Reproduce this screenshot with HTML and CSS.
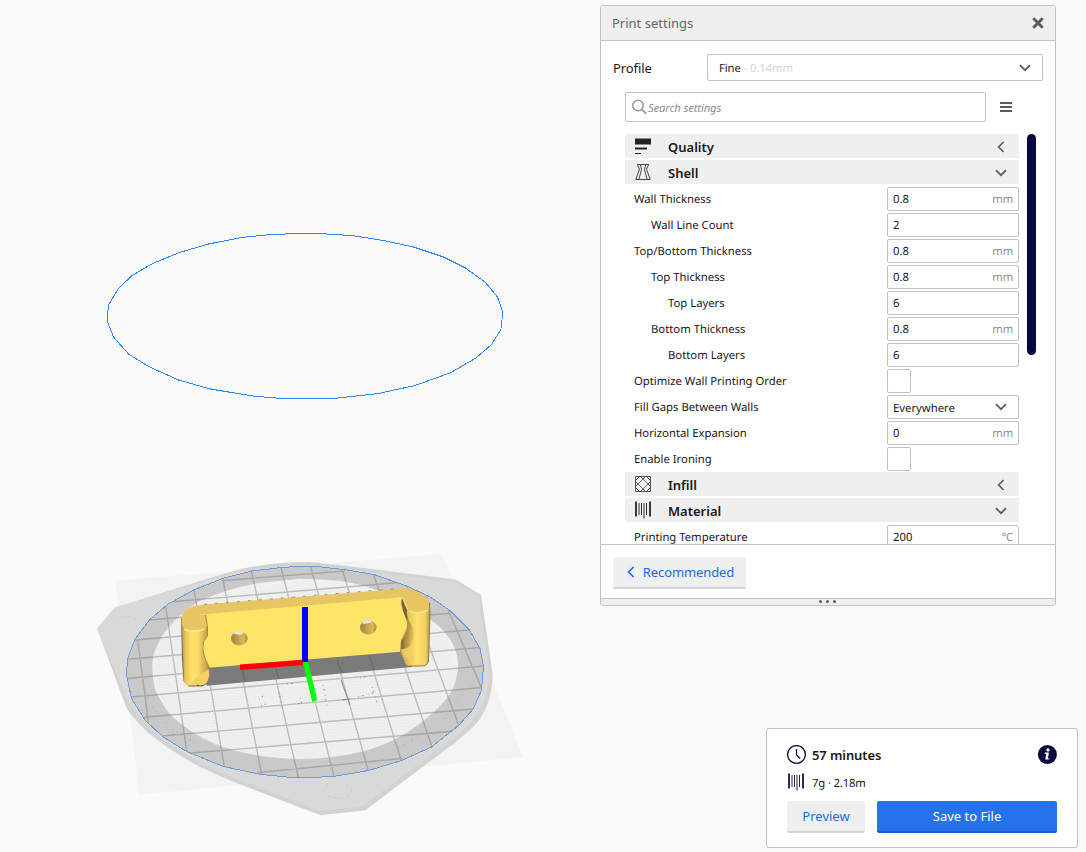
FILE: index.html
```html
<!DOCTYPE html>
<html lang="en">
<head>
<meta charset="utf-8">
<title>Print settings</title>
<link rel="stylesheet" href="styles.css">
</head>
<body>
<svg width="0" height="0" class="defs">
  <symbol id="down" viewBox="0 0 12 8"><path d="M1 1.2 6 6.2 11 1.2" fill="none" stroke="currentColor" stroke-width="1.7"/></symbol>
  <symbol id="left" viewBox="0 0 8 12"><path d="M6.6 1 1.6 6 6.6 11" fill="none" stroke="currentColor" stroke-width="1.7"/></symbol>
  <symbol id="spool" viewBox="0 0 16 18"><path d="M1 .5v15M15 .5v15" stroke="currentColor" stroke-width="1.7"/><path d="M4 2v12M6.500 2v12M9 2v15.500M11.500 2v12" stroke="currentColor" stroke-width=".9"/></symbol>
</svg>
<main class="stage">
  <svg class="viewport" width="1086" height="852" viewBox="0 0 1086 852">
    <defs>
      <clipPath id="bed"><path d="M300 566.3 281.5 567.5 251.5 571 222.5 578.5 193.5 590 167.5 604.5 149.5 620 135 639 127.5 659 126.5 675 131.5 698.5 145 720 162.5 736.5 186.5 751.5 223.5 766.5 260 774.3 296.5 778 333.5 776.5 368.5 770.5 401.5 760.5 431.5 747 458.5 725.5 473.5 708.5 481.5 690 483.5 666.5 480 648.5 469.5 630 450 610.5 428.5 596 406.5 586 374 574.5 343.5 569.5 316.5 566.5Z"/></clipPath>
      <pattern id="mesh" width="3" height="3" patternUnits="userSpaceOnUse"><path d="M0 .5h3M.5 0v3" stroke="#e9e9e9" stroke-width="1"/></pattern>
      <linearGradient id="pillarL" x1="0" x2="1"><stop offset="0" stop-color="#b79442"/><stop offset=".14" stop-color="#eac75d"/><stop offset=".38" stop-color="#ffe36a"/><stop offset=".6" stop-color="#fbd965"/><stop offset=".8" stop-color="#d9b554"/><stop offset="1" stop-color="#b08e42"/></linearGradient>
      <linearGradient id="pillarR" x1="0" x2="1"><stop offset="0" stop-color="#c9a64e"/><stop offset=".28" stop-color="#e9c75c"/><stop offset=".55" stop-color="#ffe169"/><stop offset=".85" stop-color="#f2cf60"/><stop offset="1" stop-color="#b39149"/></linearGradient>
      <linearGradient id="groove" x1="0" x2="1" y2=".3"><stop offset="0" stop-color="#65542f"/><stop offset=".4" stop-color="#917839"/><stop offset="1" stop-color="#ddba55"/></linearGradient>
      <linearGradient id="hole" x1="0" x2="1"><stop offset="0" stop-color="#9c8244"/><stop offset=".35" stop-color="#bb9b4c"/><stop offset=".75" stop-color="#dcb957"/><stop offset="1" stop-color="#a78a47"/></linearGradient>
    </defs>
    <path class="ring-line" d="M299 233.5H318.5L351.5 235.5 383.5 240.5 413.5 247 443.5 257 465.5 268 485.5 282.5 497.5 297 502.5 311 501.5 328.5 491.5 344.5 476 358 450 373 415 385.5 378.5 393.5 334 398.5H281.5L252.5 396 210.5 389 178.5 380 148.5 366.5 128.5 354 113.5 337 107.5 322V315L108.5 305 118.5 288.5 131.5 276 152.5 263.5 179.5 252.5 208.5 244 241.5 237.5 271.5 234.5Z"/>
    <path fill="#f3f3f3" d="M115.7 580.7 441.7 554 523 757 139 794.7Z"/>
    <path fill="#d2d2d2" d="M115 607.5 223 574Q260 562 310 562L346.5 566 455.5 579.5 481 595 492.5 673Q493 693 485 710 478 724 466.5 733 456 743 443 751.5L365 810.5 320.5 815 300 807.5 236.5 783Q205 770 190 761.5 150 738 135 719 128 712 125 704L97 628.5Z"/>
    <path fill="#d9d9d9" d="M115 607.5 223 575.5Q260 566 310 565L455.5 582 479 597 489 673Q489 692 481 708 471 724 461 732L363 806 320.5 811 236 779Q205 766 190 757 155 738 138 715 130 706 126 697L97 628.5Z"/>
    <g clip-path="url(#bed)">
      <path fill="#c9c9c9" d="M120 560H490V785H120Z"/>
      <path fill="#f0f0f0" d="M300 578.7 260 582.7Q224 589 198 602 183 612 173 623 163 633 160 640 151 656 152.500 666.500 152 690 161.500 701.500 167 713 180 723 191 732 203 738 212 743 223 746.500 237 752 253 754.500 270 758 300 759 317 759 333 756.700 349 755 363 751.500 385 745 403 735 418 726 428.500 716.500 441 706 446.500 698.500 455 688 456.500 676.500 459 668 457.500 658.500 455 645 448 636.500 441 627 430 619.300 408 602 376.500 590 368 587 356.500 584 340 580 325 579.700Z"/>
      <path fill="url(#mesh)" opacity=".5" d="M198 602Q160 622 155 660 152 695 180 723 210 750 253 754 330 763 384 743 452 712 456 676 453 632 400 602L300 582Z"/>
      <path class="grid" d="M137.5 639 148.5 722.7M165.7 606.7 186.7 751.7M194 590 224.3 766.7M222.7 578.3 261.7 774.3M251.3 571 298.3 777.5M281 567.3 334 776.3M310.7 567 368.3 770.7M342.3 570 401 760M373.7 575 432 747.3M406.7 586 459 726M448 609.5 481.7 688.5M221.7 580.7 345 571M171.7 601.7 396.7 582.7M149.3 620 428 597M135 640 450 613.3M127.7 659.3 469.3 630M126.7 678.5 480 647.5M130.7 697 483.3 666M144 717.3 482.3 687.5M161.7 736 474 709M185 753.5 457 731M258 772.5 402 758.5"/>
    </g>
    <path fill="none" stroke="#b0b0b0" stroke-dasharray="2 3 1 4" d="M145 688Q149 704 163 720T198 743M464 689Q455 706 441 721M421 734Q410 743 396 748"/>
    <path fill="none" stroke="#999" stroke-dasharray="1 3 2 4" d="M259 700 264 695M261 706 266 704M287 684 297 683M279 692 283 711M300 698 303 707M323 685 327 706M360 678 369 676M358 697 376 692M294 704 304 703M372 687 377 703"/>
    <path fill="none" stroke="#888" d="M341 680 350 705M342 700 350 699"/>
    <path fill="none" stroke="#cecece" stroke-dasharray="4 3" d="M328 783 324 791 330 797 346 799 352 790 345 783M115 623 121 617H132L140 622"/>
    <path class="bed-line" d="M300 566.3 281.5 567.5 251.5 571 222.5 578.5 193.5 590 167.5 604.5 149.5 620 135 639 127.5 659 126.5 675 131.5 698.5 145 720 162.5 736.5 186.5 751.5 223.5 766.5 260 774.3 296.5 778 333.5 776.5 368.5 770.5 401.5 760.5 431.5 747 458.5 725.5 473.5 708.5 481.5 690 483.5 666.5 480 648.5 469.5 630 450 610.5 428.5 596 406.5 586 374 574.5 343.5 569.5 316.5 566.5Z"/>
    <!-- model shadow on the bed -->
    <path fill="#7b7b7b" d="M206 666 402 650 412 667 206.7 685.7Z"/>
    <path stroke="#666" d="M242 668 245 682M275 666 279 679M305 665 309 676M337 660 342 673M369 656 374 670"/>
    <!-- handle -->
    <path fill="#6f6650" d="M181 617 182 660 183.500 681 189 686.500H202L207 684 190 630Z"/>
    <path fill="#e7c562" d="M181.700 616.700Q183 611 186.700 609.500 191 606.500 196.700 605.500L206.700 604.300 396.700 589 403.300 588Q409 588 413.300 590L423.300 595Q428 598 429.300 603.300V609L425 613 410 612 403.300 598 206 615 206 627 188 631 182 626Z"/>
    <path stroke="#8c7842" stroke-width=".7" stroke-dasharray="3 8" fill="none" d="M204 604.400 400 588.300"/>
    <path fill="#ffe567" d="M205 614.300 403.300 597 408 613 408 632 400 651.700 209.300 667.800 200 660V614Z"/>
    <path fill="url(#pillarL)" d="M181.700 624Q184 630 193 630.500 204 630 206.700 625.500L207.500 635 203.300 641.700Q201.500 647 202.700 651L205 659 209.300 668V675L207 682Q205 685 200 685.500H188.500Q184 684.500 184 681Z"/>
    <path fill="#f5d162" d="M208.500 669Q203 672 193 681L190 685H200Q205 685 207 682L209.300 676Z"/>
    <path fill="#e7c562" d="M181.700 616 206 614.500 207 625Q204 630.500 193 630 184 630 181.700 624Z"/>
    <path fill="none" stroke="#ffe77a" stroke-width="1.600" d="M184 629Q193 634 205 629"/>
    <path fill="none" stroke="#8d7339" stroke-width=".8" d="M205.500 615 207.500 627V636L203.500 641.500Q201.500 649 205 658.500L209.500 668"/>
    <path fill="url(#pillarR)" d="M407 609Q417 615 429 609L430 613.300 428.300 662Q427 665.500 422.500 666H409Q405 665 404.500 661L400.500 652 401 640 407.500 625Z"/>
    <path fill="url(#groove)" d="M406 611 409 621Q414 627 413.500 636 412 645 406 652L400.500 651 401 641Q408 633 407 622L402 608Z"/>
    <path fill="#efcd5e" d="M400.500 649Q406 650 411 645L413 658 405 657Z"/>
    <path fill="#776336" d="M402 598Q400.500 604 402.500 608L407 620V610Z"/>
    <path fill="#e7c562" d="M403 597 413 590 423.300 595Q430 600 429 608 425 612 412 612 407 610 406.500 606Z"/>
    <path fill="none" stroke="#ffe77a" stroke-width="1.600" d="M409 611Q418 615 428 610"/>
    <path fill="none" stroke="#8d7844" d="M429.500 603 430 613.500 428.500 661Q427 666 422 666H409"/>
    <ellipse cx="239.3" cy="638.5" rx="8.300" ry="7" fill="url(#hole)"/>
    <path fill="#e6e6e2" d="M233.5 633Q238 630 243 632L241 635 234 634Z"/>
    <ellipse cx="368.3" cy="627.5" rx="8.300" ry="7" fill="url(#hole)"/>
    <path fill="#e6e6e2" d="M362.5 622Q367 619 372 621L370 623 363 624Z"/>
    <!-- origin axes -->
    <path fill="red" d="M240 664.5 303 659.7V665L240 670ZM197 685h2v1h-2z"/>
    <path fill="#0f0" d="M302.7 662H308L317.3 700 312.3 702Z"/>
    <path fill="#00f" shape-rendering="crispEdges" d="M302 607H308V662H302Z"/>
  </svg>

  <section class="settings">
    <header class="title"><span>Print settings</span>
      <svg width="12" height="12" viewBox="0 0 12 12"><path d="M1.3 1.3 10.7 10.7M10.7 1.3 1.3 10.7" stroke="#5c5c5c" stroke-width="3"/></svg>
    </header>
    <div class="profile"><span>Profile</span>
      <div class="select"><span>Fine <i>- 0.14mm</i></span><svg class="chev" width="12" height="8"><use href="#down"/></svg></div>
    </div>
    <div class="search">
      <div class="field"><svg width="16" height="16" viewBox="0 0 16 16"><circle cx="6" cy="6.500" r="5.200" fill="none" stroke="#9a9a9a" stroke-width="1.500"/><path d="M9.800 10.300 14.300 14.800" stroke="#9a9a9a" stroke-width="1.700"/></svg><em>Search settings</em></div>
      <svg width="12" height="10"><path d="M0 1h12M0 5h12M0 9h12" stroke="#5c5c5c" stroke-width="2"/></svg>
    </div>
    <div class="scroll">
      <div class="rows">
        <div class="group"><svg width="16" height="16" viewBox="0 0 16 16"><path fill="#222" d="M0 .5h16v6H0zM0 9.500h12v2H0zM0 15h6v1H0z"/></svg><b>Quality</b><svg class="chev" width="8" height="12"><use href="#left"/></svg></div>
        <div class="group"><svg width="16" height="16" viewBox="0 0 16 16"><path fill="none" stroke="#333" stroke-width=".9" d="M2 .5H14M.5 15.500H15.500M2.500 1 4.500 5 1 15M5.500 1 6.500 5.500 4 15M13.500 1 11.500 5 15 15M10.500 1 9.500 5.500 12 15"/></svg><b>Shell</b><svg class="chev" width="12" height="8"><use href="#down"/></svg></div>
        <div class="row"><label>Wall Thickness</label><div class="input">0.8<span>mm</span></div></div>
        <div class="row in1"><label>Wall Line Count</label><div class="input">2</div></div>
        <div class="row"><label>Top/Bottom Thickness</label><div class="input">0.8<span>mm</span></div></div>
        <div class="row in1"><label>Top Thickness</label><div class="input">0.8<span>mm</span></div></div>
        <div class="row in2"><label>Top Layers</label><div class="input">6</div></div>
        <div class="row in1"><label>Bottom Thickness</label><div class="input">0.8<span>mm</span></div></div>
        <div class="row in2"><label>Bottom Layers</label><div class="input">6</div></div>
        <div class="row"><label>Optimize Wall Printing Order</label><div class="check"></div></div>
        <div class="row"><label>Fill Gaps Between Walls</label><div class="input combo">Everywhere<svg class="chev" width="12" height="8"><use href="#down"/></svg></div></div>
        <div class="row"><label>Horizontal Expansion</label><div class="input">0<span>mm</span></div></div>
        <div class="row"><label>Enable Ironing</label><div class="check"></div></div>
        <div class="group"><svg width="16" height="16" viewBox="0 0 16 16"><path fill="none" stroke="#444" stroke-width=".9" d="M.5.5h15v15H.5zM0 5 5 0M0 11 11 0M5 16 16 5M11 16 16 11M11 0 16 5M5 0 16 11M0 5 11 16M0 11 5 16"/><path fill="#efefef" d="M8 3.500 12.500 8 8 12.500 3.500 8z"/></svg><b>Infill</b><svg class="chev" width="8" height="12"><use href="#left"/></svg></div>
        <div class="group"><svg class="mat" width="16" height="18"><use href="#spool"/></svg><b>Material</b><svg class="chev" width="12" height="8"><use href="#down"/></svg></div>
        <div class="row"><label>Printing Temperature</label><div class="input">200<span>°C</span></div></div>
      </div>
      <div class="bar"></div>
    </div>
    <footer class="foot"><button class="btn grey"><svg width="8" height="12"><use href="#left"/></svg>Recommended</button></footer>
    <div class="grip"><i></i><i></i><i></i></div>
  </section>

  <section class="job">
    <div class="line time"><svg width="20" height="20" viewBox="0 0 20 20"><circle cx="9.500" cy="9.500" r="8.900" fill="none" stroke="#08073f" stroke-width="1.300"/><path d="M9.500 4V10L13 13.500" fill="none" stroke="#08073f" stroke-width="1.300"/></svg><b>57 minutes</b>
      <svg class="info" width="20" height="20" viewBox="0 0 20 20"><circle cx="10.400" cy="9.500" r="9.500" fill="#08073f"/><circle cx="11" cy="4.900" r="1.600" fill="#fff"/><path fill="#fff" d="M7.900 7.600H11.900L10.900 13.400H12.400L12.200 14.600H8.200L9.200 8.900H7.700Z"/></svg></div>
    <div class="line use"><svg width="16" height="18"><use href="#spool"/></svg><span>7g · 2.18m</span></div>
    <div class="actions"><button class="btn grey">Preview</button><button class="btn blue">Save to File</button></div>
  </section>
</main>
</body>
</html>
```
FILE: styles.css
```css
* { box-sizing: border-box; }
body { margin: 0; background: #fafafa; font: 13px/18px "Noto Sans", sans-serif; color: #191919; overflow: hidden; }
svg { display: block; flex: none; }
b { font-weight: 600; }
.defs { position: absolute; }
.stage { position: relative; width: 1086px; height: 852px; }
.ring-line { fill: none; stroke: #3282ff; shape-rendering: crispEdges; }
.bed-line { fill: none; stroke: #6f9ad8; shape-rendering: crispEdges; }
.grid { fill: none; stroke: #777; stroke-opacity: .42; stroke-width: 1.4; }

/* panels float over the 3D view */
.settings { position: absolute; left: 600px; top: 5px; width: 456px; height: 601px; display: flex; flex-direction: column; background: #fff; border: 1px solid #c0c1c2; border-radius: 3px; overflow: hidden; }
.title { height: 35px; display: flex; align-items: center; justify-content: space-between; padding: 0 11px; background: #efefef; border-bottom: 1px solid #c0c1c2; color: #666; }
.profile { display: flex; align-items: center; height: 27px; margin: 13px 12px 11px; }
.profile > span { width: 94px; letter-spacing: -.1px; }
.select { flex: 1; height: 27px; display: flex; align-items: center; justify-content: space-between; padding: 0 11px; border: 1px solid #c0c1c2; border-radius: 2px; }
.select, .field, .row, .use { font-size: 11.3px; text-rendering: geometricPrecision; }
.select i { font-style: normal; color: #d5d5d5; }
.select span { letter-spacing: -.1px; padding-top: 2px; }
.chev { color: #5c5c5c; }
.search { display: flex; align-items: center; gap: 14px; margin-left: 24px; }
.field { width: 361px; height: 30px; display: flex; align-items: center; padding-left: 6px; border: 1px solid #c0c1c2; border-radius: 2px; color: #8f8f8f; }
.field em { letter-spacing: -.16px; padding-top: 3px; }
.scroll { display: flex; gap: 8px; margin: 12px 0 0 24px; height: 410px; overflow: hidden; }
.rows { width: 394px; display: flex; flex-direction: column; gap: 2px; }
.bar { width: 9px; height: 221px; border-radius: 5px; background: #08073f; }
.group, .row { flex: none; height: 24px; display: flex; align-items: center; }
.group { background: #efefef; padding: 0 12px 0 10px; }
.group b { margin-left: 17px; flex: 1; padding-top: 1px; }
.group .chev { margin-top: 2px; }
.group .chev[width="8"] { margin-right: 2px; }
.mat { margin-top: -1px; }
.row { padding-left: 9px; }
.row label { flex: 1; padding-top: 3px; }
.row.in1 { padding-left: 26px; }
.row.in2 { padding-left: 43px; }
.input, .check { position: relative; top: 1px; height: 24px; border: 1px solid #c0c1c2; border-radius: 2px; background: #fff; }
.input { width: 132px; display: flex; align-items: center; justify-content: space-between; padding: 2px 5px 0; }
.input span { color: #8f8f94; letter-spacing: -.2px; }
.combo { padding: 3px 11px 0 5px; }
.combo .chev { margin-top: -3px; }
.check { width: 24px; margin-right: 108px; }
.foot { height: 54px; border-top: 1px solid #c0c1c2; padding: 12px; }
.btn { font: inherit; height: 32px; border: 0; border-bottom: 2px solid #d4d4d4; border-radius: 2px; padding: 0; display: flex; align-items: center; justify-content: center; gap: 8px; }
.grey { background: #efefef; color: #196ce0; }
.foot .btn { width: 133px; padding-left: 2px; letter-spacing: -.1px; }
.blue { background: #2672ea; border-color: #1b5dcc; color: #fff; }
.grip { flex: 1; border-top: 1px solid #c0c1c2; background: #efefef; display: flex; gap: 4px; justify-content: center; align-items: center; padding: 0 2px 1px 0; }
.grip i { width: 3px; height: 3px; border-radius: 50%; background: #5c5c5c; }

.job { position: absolute; left: 766px; top: 728px; width: 312px; height: 120px; padding: 16px 20px; background: #fff; border: 1px solid #c0c1c2; border-radius: 3px; }
.line { display: flex; align-items: center; }
.time { height: 20px; gap: 5px; letter-spacing: -.1px; }
.info { margin-left: auto; }
.use { height: 18px; margin-top: 8px; padding-left: 1px; gap: 8px; color: #08073f; }
.use span { color: #191919; padding-top: 4px; letter-spacing: -.15px; }
.actions { display: flex; gap: 12px; margin-top: 10px; }
.actions .grey { width: 78px; }
.actions .blue { flex: 1; }
```
